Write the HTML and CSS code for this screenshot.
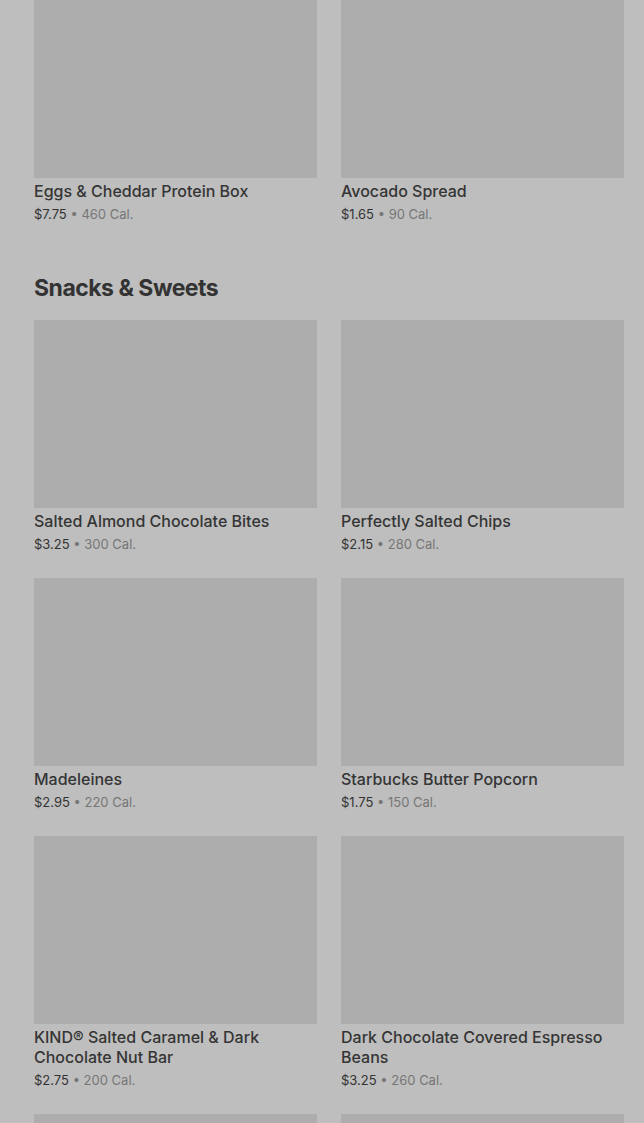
FILE: index.html
```html
<!DOCTYPE html>
<html lang="en">
<head>
<meta charset="utf-8">
<title>Menu</title>
<link rel="stylesheet" href="styles.css">
</head>
<body>
<main class="page">
  <section class="section first">
    <div class="grid">
      <article class="card">
        <div class="thumb"></div>
        <h3 class="name">Eggs &amp; Cheddar Protein Box</h3>
        <p class="meta"><span class="price">$7.75</span> • 460 Cal.</p>
      </article>
      <article class="card">
        <div class="thumb"></div>
        <h3 class="name">Avocado Spread</h3>
        <p class="meta"><span class="price">$1.65</span> • 90 Cal.</p>
      </article>
    </div>
  </section>

  <section class="section">
    <h2 class="heading">Snacks &amp; Sweets</h2>
    <div class="grid">
      <article class="card">
        <div class="thumb"></div>
        <h3 class="name">Salted Almond Chocolate Bites</h3>
        <p class="meta"><span class="price">$3.25</span> • 300 Cal.</p>
      </article>
      <article class="card">
        <div class="thumb"></div>
        <h3 class="name">Perfectly Salted Chips</h3>
        <p class="meta"><span class="price">$2.15</span> • 280 Cal.</p>
      </article>
      <article class="card">
        <div class="thumb"></div>
        <h3 class="name">Madeleines</h3>
        <p class="meta"><span class="price">$2.95</span> • 220 Cal.</p>
      </article>
      <article class="card">
        <div class="thumb"></div>
        <h3 class="name">Starbucks Butter Popcorn</h3>
        <p class="meta"><span class="price">$1.75</span> • 150 Cal.</p>
      </article>
      <article class="card">
        <div class="thumb"></div>
        <h3 class="name">KIND® Salted Caramel &amp; Dark Chocolate Nut Bar</h3>
        <p class="meta"><span class="price">$2.75</span> • 200 Cal.</p>
      </article>
      <article class="card">
        <div class="thumb"></div>
        <h3 class="name">Dark Chocolate Covered Espresso Beans</h3>
        <p class="meta"><span class="price">$3.25</span> • 260 Cal.</p>
      </article>
      <article class="card">
        <div class="thumb"></div>
      </article>
      <article class="card">
        <div class="thumb"></div>
      </article>
    </div>
  </section>
</main>
</body>
</html>
```

FILE: styles.css
```css
html, body {
  margin: 0;
  padding: 0;
  background: #bebebe;
  overflow: hidden;
}

body {
  font-family: Inter, "Liberation Sans", sans-serif;
  color: #333333;
}

.page {
  padding: 0 20px 0 34px;
}

.section.first {
  margin-top: -10px;
}

.grid {
  display: grid;
  grid-template-columns: 1fr 1fr;
  column-gap: 24px;
}

.card {
  padding-bottom: 24px;
}

.thumb {
  height: 188px;
  background: #adadad;
}

.name {
  margin: 3px 0 0;
  font-size: 16px;
  line-height: 20px;
  font-weight: 500;
  color: #353535;
}

.meta {
  margin: 3px 0 0;
  font-size: 13px;
  line-height: 20px;
  color: #767676;
}

.price {
  color: #333333;
}

.heading {
  margin: 26px 0 18px;
  font-size: 23px;
  line-height: 28px;
  font-weight: 700;
  letter-spacing: -0.5px;
  color: #333333;
}
```
